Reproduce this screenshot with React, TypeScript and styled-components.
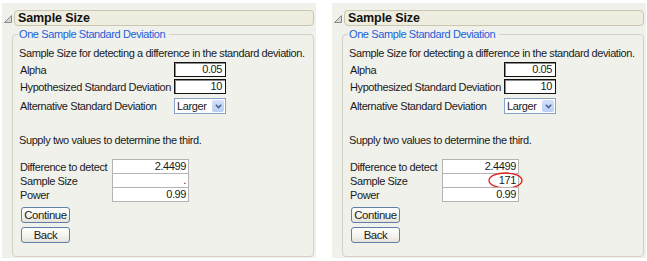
import React from "react";
import styled, { createGlobalStyle } from "styled-components";

const GlobalStyle = createGlobalStyle`
  html, body { margin: 0; padding: 0; background: #ffffff; }
  body {
    font-family: "Liberation Sans", Arial, sans-serif;
    font-size: 11px;
    line-height: 14px;
    color: #1a1a1a;
  }
`;

const Page = styled.div`
  display: flex;
  gap: 16px;
  padding: 3px 0 0 2px;
`;

const Panel = styled.section`
  width: 314px;
  height: 255px;
  box-sizing: border-box;
  padding: 7px 2px 1px 0;
  background: #f1f1ec;
  display: flex;
  flex-direction: column;
`;

const Header = styled.div`
  display: flex;
  align-items: center;
  padding-left: 2px;
  gap: 2px;
`;

const Disclosure = styled.svg`
  width: 8px;
  height: 8px;
  margin-top: 2px;
  flex: none;
`;

const TitleBox = styled.div`
  flex: 1;
  height: 16px;
  box-sizing: border-box;
  border: 1px solid #c9c6b0;
  border-radius: 4px;
  background: #efeddf;
  padding-left: 3px;
  display: flex;
  align-items: center;
`;

const Title = styled.h2`
  margin: 0;
  font-size: 12.5px;
  font-weight: bold;
  line-height: 14px;
  letter-spacing: -0.1px;
  color: #111;
`;

const Group = styled.fieldset`
  flex: 1;
  margin: 1px 0 0 10px;
  padding: 5px 6px 0 7px;
  border: 1px solid #d3d1c6;
  border-radius: 4px;
  min-width: 0;
`;

const GroupLegend = styled.legend`
  margin-left: -2px;
  padding: 0 4px 0 1px;
  font-size: 11px;
  line-height: 14px;
  letter-spacing: -0.4px;
  color: #2160dc;
`;

const Content = styled.div`
  display: flex;
  flex-direction: column;
  align-items: flex-start;
  letter-spacing: -0.4px;
`;

const Text = styled.p<{ $mt?: number }>`
  margin: ${(p) => p.$mt ?? 0}px 0 0 -1px;
  height: 14px;
  white-space: nowrap;
`;

const ParamRow = styled.div<{ $mt: number; $h?: number }>`
  display: flex;
  align-items: center;
  height: ${(p) => p.$h ?? 15}px;
  margin-top: ${(p) => p.$mt}px;
`;

const ParamLabel = styled.span`
  width: 154px;
  white-space: nowrap;
`;

const NumberBox = styled.div`
  width: 52px;
  height: 15px;
  box-sizing: border-box;
  border: 1px solid #111;
  box-shadow: inset 1px 1px 0 #8c8c8c;
  background: #fff;
  text-align: right;
  padding-right: 3px;
  line-height: 13px;
`;

const Select = styled.div`
  width: 52px;
  height: 16px;
  box-sizing: border-box;
  border: 1px solid #86a2c6;
  background: #fff;
  display: flex;
  align-items: center;
  justify-content: space-between;
  padding: 0 1px 0 2px;
`;

const SelectButton = styled.span`
  width: 12px;
  height: 12px;
  border-radius: 2px;
  background: linear-gradient(#d4e1fb, #b9cdf5);
  display: flex;
  align-items: center;
  justify-content: center;
`;

const CalcTable = styled.div`
  margin-top: 12px;
  display: flex;
  flex-direction: column;
`;

const CalcRow = styled.div`
  display: flex;
  align-items: center;
  height: 15px;
  & + & { margin-top: -1px; }
`;

const CalcLabel = styled.span`
  width: 92px;
  white-space: nowrap;
`;

const CalcCell = styled.div`
  position: relative;
  width: 77px;
  height: 15px;
  box-sizing: border-box;
  border: 1px solid #b4b4b4;
  background: #fff;
  text-align: right;
  padding-right: 2px;
  line-height: 13px;
`;

const Highlight = styled.svg`
  position: absolute;
  left: 45px;
  top: -2px;
  width: 35px;
  height: 17px;
  overflow: visible;
  pointer-events: none;
`;

const ActionButton = styled.button<{ $mt: number }>`
  margin: ${(p) => p.$mt}px 0 0 1px;
  width: 49px;
  height: 16px;
  padding: 0;
  box-sizing: border-box;
  border: 1px solid #5f7ea9;
  border-radius: 3px;
  background: linear-gradient(#ffffff, #f3f2ec 60%, #e4e2d8);
  font-family: "Liberation Sans", Arial, sans-serif;
  font-size: 11.4px;
  letter-spacing: -0.4px;
  line-height: 14px;
  color: #1a1a1a;
`;

function SampleSizePanel({ sampleSize, highlight }: { sampleSize: string; highlight?: boolean }) {
  return (
    <Panel>
      <Header>
        <Disclosure viewBox="0 0 8 8">
          <polygon points="0.5,7.5 7.5,7.5 7.5,0.5" fill="#d6d6d2" stroke="#8a8a86" strokeWidth="1" />
        </Disclosure>
        <TitleBox>
          <Title>Sample Size</Title>
        </TitleBox>
      </Header>
      <Group>
        <GroupLegend>One Sample Standard Deviation</GroupLegend>
        <Content>
          <Text>Sample Size for detecting a difference in the standard deviation.</Text>
          <ParamRow $mt={2}>
            <ParamLabel>Alpha</ParamLabel>
            <NumberBox>0.05</NumberBox>
          </ParamRow>
          <ParamRow $mt={2}>
            <ParamLabel>Hypothesized Standard Deviation</ParamLabel>
            <NumberBox>10</NumberBox>
          </ParamRow>
          <ParamRow $mt={4} $h={16}>
            <ParamLabel>Alternative Standard Deviation</ParamLabel>
            <Select>
              <span>Larger</span>
              <SelectButton>
                <svg width="7" height="5" viewBox="0 0 7 5">
                  <path d="M0.8 0.8 L3.5 3.6 L6.2 0.8" fill="none" stroke="#4a5f8c" strokeWidth="1.5" />
                </svg>
              </SelectButton>
            </Select>
          </ParamRow>
          <Text $mt={19}>Supply two values to determine the third.</Text>
          <CalcTable>
            <CalcRow>
              <CalcLabel>Difference to detect</CalcLabel>
              <CalcCell>2.4499</CalcCell>
            </CalcRow>
            <CalcRow>
              <CalcLabel>Sample Size</CalcLabel>
              <CalcCell>
                {sampleSize}
                {highlight && (
                  <Highlight viewBox="0 0 35 17">
                    <ellipse cx="17.5" cy="8.5" rx="16.5" ry="7.5" fill="none" stroke="#e0201c" strokeWidth="1.3" />
                  </Highlight>
                )}
              </CalcCell>
            </CalcRow>
            <CalcRow>
              <CalcLabel>Power</CalcLabel>
              <CalcCell>0.99</CalcCell>
            </CalcRow>
          </CalcTable>
          <ActionButton $mt={5}>Continue</ActionButton>
          <ActionButton $mt={4}>Back</ActionButton>
        </Content>
      </Group>
    </Panel>
  );
}

export default function App() {
  return (
    <>
      <GlobalStyle />
      <Page>
        <SampleSizePanel sampleSize="." />
        <SampleSizePanel sampleSize="171" highlight />
      </Page>
    </>
  );
}
